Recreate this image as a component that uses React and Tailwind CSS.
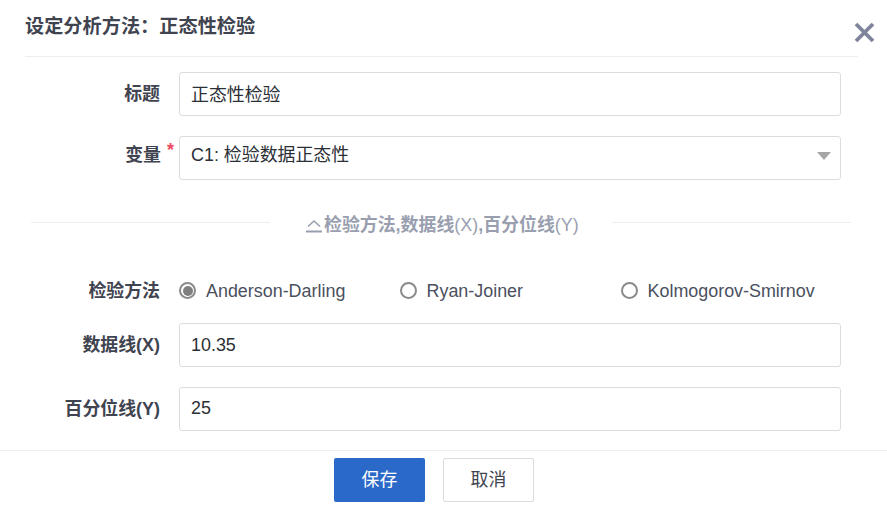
const font = { fontFamily: '"Liberation Sans", "Noto Sans CJK SC", sans-serif' };

function Row({ label, required, children, className = "" }) {
  return (
    <div className={`flex items-center ${className}`}>
      <div className={`relative w-[161px] shrink-0 text-right text-[17.92px] font-bold leading-[22px] text-[#3f4450] ${required ? "pb-[6px]" : "pr-[1px]"}`}>
        {label}
        {required && <span className="absolute right-[-13px] top-[-5px] text-[18px] font-bold text-[#f04864]">*</span>}
      </div>
      {children}
    </div>
  );
}

function Field({ children, icon, shift = "" }) {
  return (
    <div className="ml-[18px] flex h-[44px] w-[662px] items-center justify-between rounded-[3px] border border-[#dcdcdc] bg-white pl-[11px] pr-[9px] text-[17.92px] text-[#2b2f36]">
      <span className={shift}>{children}</span>
      {icon}
    </div>
  );
}

function Radio({ label, checked, className = "" }) {
  return (
    <div className={`flex items-center ${className}`}>
      <span className="mb-[1px] flex h-[17px] w-[17px] items-center justify-center rounded-full border-2 border-[#8a8a8a] bg-white">
        {checked && <span className="h-[10px] w-[10px] rounded-full bg-[#7f7f7f]" />}
      </span>
      <span className="ml-[10px] text-[17.92px] leading-[22px] text-[#4a5060]">{label}</span>
    </div>
  );
}

export default function App() {
  return (
    <div style={font} className="relative flex h-[507px] w-[887px] flex-col overflow-hidden bg-white">
      <header className="mx-[25px] flex h-[57px] w-[833px] items-start border-b border-[#eeeeee] pt-[14px] text-[19.2px] font-bold leading-[25px] text-[#3f4450]">
        设定分析方法：正态性检验
      </header>
      <button className="absolute left-[854px] top-[22px] text-[#7d849c]" aria-label="关闭">
        <svg width="21" height="21" viewBox="0 0 21 21" fill="none" stroke="currentColor" strokeWidth="3.8">
          <path d="M2 2 L19 19 M19 2 L2 19" />
        </svg>
      </button>

      <Row label="标题" className="mt-[15px]">
        <Field shift="pt-[2px]">正态性检验</Field>
      </Row>
      <Row label="变量" required className="mt-[20px]">
        <Field shift="pb-[6px]" icon={
          <svg width="14" height="8" viewBox="0 0 14 8" className="mb-[5px] fill-[#a6a6a6]"><path d="M0 0 H14 L7 8 Z" /></svg>
        }>C1: 检验数据正态性</Field>
      </Row>

      <div className="mt-[30px] flex h-[24px] items-center pl-[31px]">
        <div className="h-px w-[239px] bg-[#eeeeee]" />
        <div className="ml-[35px] flex w-[307px] items-center pt-[6px] text-[17.92px] font-bold leading-[24px] text-[#9a9fb0]">
          <svg width="18" height="14" viewBox="0 0 18 14" fill="none" stroke="#9a9fb0" className="mr-[1px] mt-[2px] shrink-0">
            <path d="M3 7.5 L9 2 L15 7.5" strokeWidth="1.6" />
            <path d="M1 12.5 H17" strokeWidth="2" />
          </svg>
          <span className="whitespace-nowrap">检验方法,数据线<span className="font-normal">(X)</span>,百分位线<span className="font-normal">(Y)</span></span>
        </div>
        <div className="h-px w-[239px] bg-[#eeeeee]" />
      </div>

      <Row label="检验方法" className="mt-[46px]">
        <div className="ml-[18px] flex h-[22px] items-center">
          <Radio checked label="Anderson-Darling" className="w-[220.5px]" />
          <Radio label="Ryan-Joiner" className="w-[221px]" />
          <Radio label="Kolmogorov-Smirnov" />
        </div>
      </Row>
      <Row label="数据线(X)" className="mt-[21px]">
        <Field>10.35</Field>
      </Row>
      <Row label="百分位线(Y)" className="mt-[20px]">
        <Field shift="pb-[1px]">25</Field>
      </Row>

      <footer className="mt-[19px] flex h-[57px] gap-[18px] border-t border-[#eeeeee] pl-[334px] pt-[7px]">
        <button className="h-[44px] w-[91px] rounded-[2px] bg-[#2b69c9] text-[17.92px] text-white">保存</button>
        <button className="h-[44px] w-[91px] rounded-[2px] border border-[#dcdcdc] bg-white text-[17.92px] text-[#3f4450]">取消</button>
      </footer>
    </div>
  );
}
